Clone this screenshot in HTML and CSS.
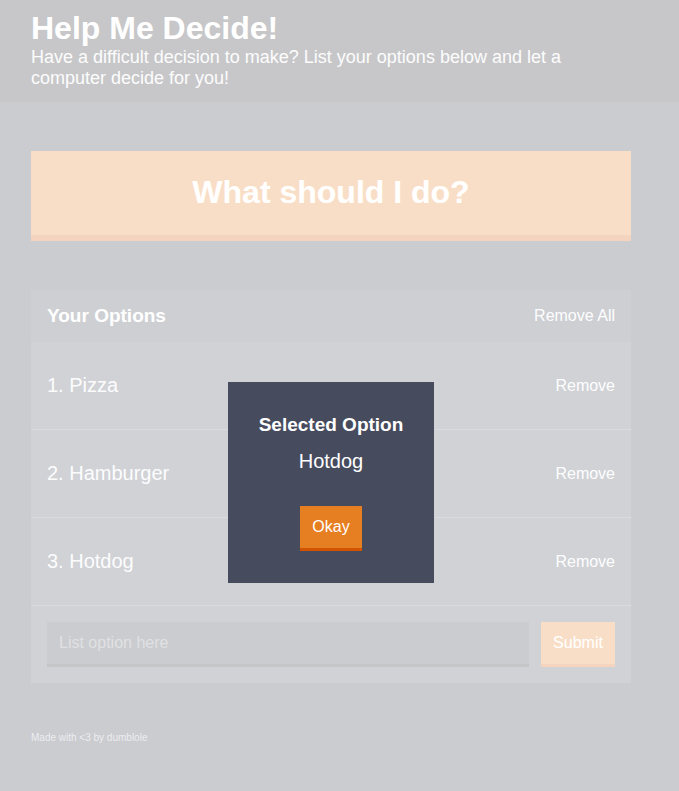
FILE: index.html
```html
<!DOCTYPE html>
<html lang="en">
<head>
<meta charset="utf-8">
<title>Help Me Decide!</title>
<link rel="stylesheet" href="styles.css">
</head>
<body>
<header class="header">
  <div class="container">
    <h1 class="header__title">Help Me Decide!</h1>
    <h2 class="header__subtitle">Have a difficult decision to make? List your options below and let a computer decide for you!</h2>
  </div>
</header>
<main class="container">
  <button class="big-button">What should I do?</button>
  <section class="widget">
    <div class="widget-header">
      <h3 class="widget-header__title">Your Options</h3>
      <button class="button button--link">Remove All</button>
    </div>
    <div class="option">
      <p class="option__text">1. Pizza</p>
      <button class="button button--link">Remove</button>
    </div>
    <div class="option">
      <p class="option__text">2. Hamburger</p>
      <button class="button button--link">Remove</button>
    </div>
    <div class="option">
      <p class="option__text">3. Hotdog</p>
      <button class="button button--link">Remove</button>
    </div>
    <form class="add-option">
      <input class="add-option__input" type="text" placeholder="List option here">
      <button class="button" type="button">Submit</button>
    </form>
  </section>
  <footer class="footer">Made with &lt;3 by dumblole</footer>
</main>
<div class="overlay">
  <div class="modal">
    <h3 class="modal__title">Selected Option</h3>
    <p class="modal__body">Hotdog</p>
    <button class="button">Okay</button>
  </div>
</div>
</body>
</html>
```

FILE: styles.css
```css
* { box-sizing: border-box; }
html, body { margin: 0; padding: 0; }
body {
  background: #333745;
  font-family: "Liberation Sans", Arial, Helvetica, sans-serif;
  color: #fff;
  height: 791px;
  overflow: hidden;
}
.container {
  width: 600px;
  margin-left: 31px;
}
.header {
  background: #20222b;
  padding: 10px 0 13px;
}
.header__title {
  margin: 0;
  font-size: 32px;
  line-height: 37px;
  font-weight: bold;
}
.header__subtitle {
  margin: 0;
  font-size: 18px;
  line-height: 21px;
  font-weight: normal;
  color: #f2f2f2;
  width: 560px;
}
.big-button {
  display: block;
  width: 600px;
  margin: 49px 0 49px;
  background: #e67e22;
  border: none;
  border-bottom: 6px solid #d35400;
  color: #fff;
  font-family: inherit;
  font-weight: bold;
  font-size: 32px;
  line-height: 37px;
  padding: 23px 0 24px;
}
.widget {
  background: #464b5e;
}
.widget-header {
  background: #3c4251;
  display: flex;
  justify-content: space-between;
  align-items: center;
  padding: 0 16px;
  height: 52px;
}
.widget-header__title {
  margin: 0;
  font-size: 19px;
  font-weight: bold;
}
.button {
  background: #e67e22;
  border: none;
  border-bottom: 3px solid #d35400;
  color: #fff;
  font-family: inherit;
  font-size: 16px;
  padding: 0 12px;
  height: 45px;
}
.button--link {
  background: none;
  border: none;
  padding: 0;
  height: auto;
  color: #f6f7fb;
  font-size: 16px;
}
.option {
  display: flex;
  justify-content: space-between;
  align-items: center;
  padding: 0 16px;
  height: 88px;
  border-bottom: 1px solid #6c7085;
}
.option__text {
  margin: 0;
  font-size: 20px;
  color: #f3f4f8;
}
.add-option {
  display: flex;
  gap: 12px;
  padding: 16px;
  height: 77px;
}
.add-option__input {
  flex: 1;
  height: 45px;
  background: #333745;
  border: none;
  border-bottom: 3px solid #1a1c24;
  color: #fff;
  font-family: inherit;
  font-size: 16px;
  padding: 0 12px;
  outline: none;
}
.add-option__input::placeholder { color: #85868e; }
.add-option .button { width: 74px; padding: 0; }
.footer {
  margin-top: 49px;
  font-size: 10px;
  color: #b4b6c2;
}
.overlay {
  position: fixed;
  inset: 0;
  background: rgba(255, 255, 255, 0.75);
}
.modal {
  position: absolute;
  left: 228px;
  top: 382px;
  width: 206px;
  height: 201px;
  background: #474b5e;
  padding: 32px 0 0;
  text-align: center;
}
.modal__title {
  margin: 0 0 16px;
  font-size: 19px;
  line-height: 21px;
  font-weight: bold;
}
.modal__body {
  margin: 0 0 34px;
  font-size: 20px;
  line-height: 21px;
}
.modal .button { width: 62px; padding: 0; }
```
